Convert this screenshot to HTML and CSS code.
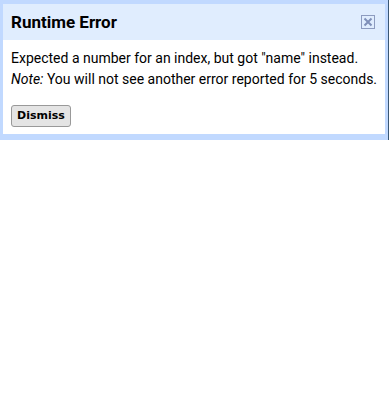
FILE: index.html
```html
<!DOCTYPE html>
<html>
<head>
<meta charset="UTF-8">
<title>Runtime Error</title>
<link rel="stylesheet" href="styles.css">
</head>
<body>

<div class="dialog">
  <div class="dialog-title">
    <span>Runtime Error</span>
    <span class="dialog-close">
      <svg width="14" height="14" viewBox="0 0 14 14">
        <rect x="0.5" y="0.5" width="13" height="13" fill="#e0edfe" stroke="#8d9bbf"/>
        <path d="M3.5 3.5 L10.5 10.5 M10.5 3.5 L3.5 10.5" stroke="#7f8fb8" stroke-width="2"/>
      </svg>
    </span>
  </div>
  <div class="dialog-content">
    <div class="line">Expected a number for an index, but got "name" instead.</div>
    <div class="line"><i>Note:</i> You will not see another error reported for 5 seconds.</div>
  </div>
  <div class="dialog-buttons">
    <button type="button">Dismiss</button>
  </div>
</div>

</body>
</html>
```

FILE: styles.css
```css
body {
  margin: 0;
  background: #fff;
  font-family: Roboto, "Liberation Sans", sans-serif;
}

.dialog {
  box-sizing: border-box;
  width: 389px;
  padding: 4px 3px 6px 3px;
  background-color: #c1d9ff;
  border-right: 1px solid #3a5774;
}

.dialog-title {
  display: flex;
  justify-content: space-between;
  align-items: center;
  background-color: #e0edfe;
  color: #000;
  font-size: 17px;
  font-weight: bold;
  line-height: 20px;
  padding: 8px 10px 8px 8px;
}

.dialog-close {
  display: flex;
}

.dialog-content {
  background-color: #fff;
  padding: 8px 4px 8px 8px;
  font-size: 14px;
  line-height: 21px;
  color: #000;
}

.line {
  white-space: nowrap;
}

.dialog-buttons {
  background-color: #fff;
  padding: 6px 8px 7px 8px;
}

button {
  font-family: "DejaVu Sans", Verdana, sans-serif;
  font-size: 11px;
  font-weight: bold;
  color: #000;
  height: 22px;
  padding: 0 5px;
  background-color: #e4e4e4;
  border: 1px solid #999;
  border-radius: 3px;
  cursor: pointer;
}
```
